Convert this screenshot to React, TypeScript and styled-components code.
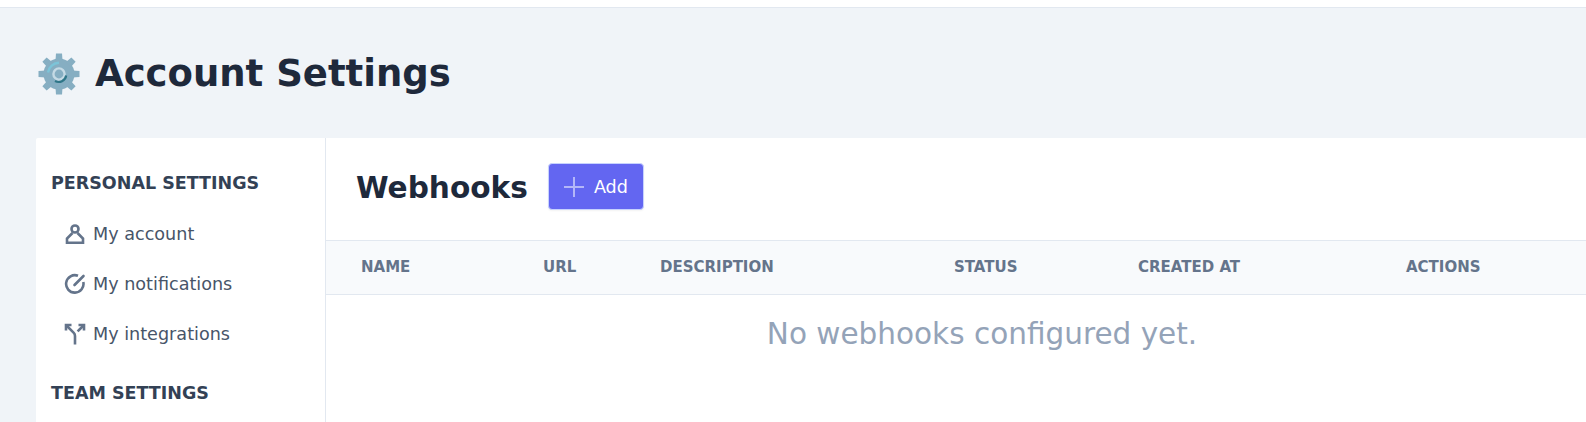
import React from "react";
import styled, { createGlobalStyle } from "styled-components";

const Global = createGlobalStyle`
  html, body { margin: 0; padding: 0; height: 422px; overflow: hidden; background: #fff; }
  * { box-sizing: border-box; }
  body { font-family: "DejaVu Sans", sans-serif; }
`;

const Page = styled.div`
  margin-top: 7px;
  width: 1586px;
  height: 415px;
  overflow: hidden;
  background: #f0f4f8;
  border-top: 1px solid #e2e8f0;
  padding: 0 0 0 36px;
`;
const Heading = styled.h1`
  display: flex;
  align-items: center;
  gap: 15px;
  height: 130px;
  margin: 0;
  padding: 2px 0 0 2px;
  font-size: 37px;
  line-height: 44px;
  font-weight: 700;
  color: #1e293b;
`;
const Card = styled.div`
  display: flex;
  width: 1602px;
  height: 400px;
  background: #fff;
  border-radius: 2px 0 0 0;
`;
const Sidebar = styled.aside`
  flex: 0 0 290px;
  border-right: 1px solid #e2e8f0;
  padding: 35px 15px 0;
`;
const SectionTitle = styled.h3<{ $gap?: number }>`
  margin: ${(p) => p.$gap ?? 0}px 0 0;
  font-size: 17.5px;
  line-height: 20px;
  font-weight: 700;
  color: #334155;
`;
const NavList = styled.ul`
  list-style: none;
  margin: 16px 0 0;
  padding: 0;
`;
const NavItem = styled.li`
  display: flex;
  align-items: center;
  gap: 7px;
  height: 50px;
  padding-left: 13px;
  font-size: 17.6px;
  color: #475569;
`;
const Main = styled.main`
  flex: 1;
`;
const TitleRow = styled.div`
  display: flex;
  align-items: center;
  gap: 20px;
  height: 102px;
  padding: 0 0 3px 30px;
`;
const Title = styled.h2`
  margin: 0;
  font-size: 29.6px;
  line-height: 36px;
  font-weight: 700;
  color: #1e293b;
`;
const AddButton = styled.button`
  display: flex;
  align-items: center;
  gap: 9px;
  width: 96px;
  height: 47px;
  margin-bottom: 3px;
  padding: 1px 14px 0;
  background: #6366f1;
  border: 1px solid #c7d2fe;
  border-radius: 4px;
  color: #fff;
  font: 17.6px "DejaVu Sans", sans-serif;
  box-shadow: 0 1px 2px rgba(0, 0, 0, 0.05);
`;
const Table = styled.table`
  width: 100%;
  table-layout: fixed;
  border-collapse: collapse;
`;
const HeadRow = styled.tr`
  height: 54px;
  background: #f8fafc;
  border-top: 1px solid #e2e8f0;
  border-bottom: 1px solid #e2e8f0;
`;
const Th = styled.th<{ $w: number }>`
  width: ${(p) => p.$w}px;
  padding: 0 0 1px 35px;
  text-align: left;
  font-size: 15px;
  font-weight: 700;
  color: #64748b;
  &:not(:first-child) { padding-left: 0; }
`;
const Empty = styled.td`
  padding: 21px 0 20px;
  text-align: center;
  font-size: 29.5px;
  line-height: 36px;
  color: #94a3b8;
`;

const TEETH = [0, 45, 90, 135, 180, 225, 270, 315];
const Gear = () => (
  <svg width="42" height="42" viewBox="0 0 42 42">
    <circle cx="21" cy="21" r="15.5" fill="#86aec2" />
    {TEETH.map((a) => (
      <path key={a} d="M17.5 8 18 .5H24L24.5 8Z" fill="#86aec2" transform={`rotate(${a} 21 21)`} />
    ))}
    <path d="M10 19.5A11.2 11.2 0 0 1 21 9.8" fill="none" stroke="#7cc4d8" strokeWidth="2.4" />
    <circle cx="21" cy="21" r="5.6" fill="none" stroke="#c5dae5" strokeWidth="2.4" />
    <path d="M28.2 22.5A7.6 7.6 0 0 1 17 28" fill="none" stroke="#2f7688" strokeWidth="2.2" />
  </svg>
);
const IconBase = styled.svg`
  flex: 0 0 22px;
  width: 22px;
  height: 22px;
  fill: none;
  stroke: #64748b;
  stroke-width: 2.6;
`;
const UserIcon = () => (
  <IconBase viewBox="0 0 22 22">
    <circle cx="11" cy="6" r="3.5" />
    <path d="M8.5 10 3 15.5V19.8H19V15.5L13.5 10" />
  </IconBase>
);
const CheckIcon = () => (
  <IconBase viewBox="0 0 22 22">
    <path d="M14 2.8A8.7 8.7 0 1 0 19.3 9" />
    <path d="M10.5 12 19.5 3" strokeLinecap="round" />
  </IconBase>
);
const SplitIcon = () => (
  <IconBase viewBox="0 0 22 22">
    <path d="M3 3 9.8 9.8Q11 11 11 13V21.5" />
    <path d="M2 7.5V2H7.5" />
    <path d="M19 3 13.6 8.4" />
    <path d="M14.5 2H20V7.5" />
  </IconBase>
);
const PlusIcon = () => (
  <svg width="22" height="22" viewBox="0 0 22 22" stroke="#b4b6f8" strokeWidth="2" fill="none">
    <path d="M11 1V21M1 11H21" />
  </svg>
);

const columns: [string, number][] = [
  ["NAME", 217],
  ["URL", 117],
  ["DESCRIPTION", 294],
  ["STATUS", 184],
  ["CREATED AT", 268],
  ["ACTIONS", 232],
];

export default function App() {
  return (
    <>
      <Global />
      <Page>
        <Heading>
          <Gear />
          Account Settings
        </Heading>
        <Card>
          <Sidebar>
            <SectionTitle>PERSONAL SETTINGS</SectionTitle>
            <NavList>
              <NavItem><UserIcon />My account</NavItem>
              <NavItem><CheckIcon />My notifications</NavItem>
              <NavItem><SplitIcon />My integrations</NavItem>
            </NavList>
            <SectionTitle $gap={24}>TEAM SETTINGS</SectionTitle>
          </Sidebar>
          <Main>
            <TitleRow>
              <Title>Webhooks</Title>
              <AddButton><PlusIcon />Add</AddButton>
            </TitleRow>
            <Table>
              <thead>
                <HeadRow>
                  {columns.map(([c, w]) => (
                    <Th key={c} $w={w}>{c}</Th>
                  ))}
                </HeadRow>
              </thead>
              <tbody>
                <tr>
                  <Empty colSpan={6}>No webhooks configured yet.</Empty>
                </tr>
              </tbody>
            </Table>
          </Main>
        </Card>
      </Page>
    </>
  );
}
